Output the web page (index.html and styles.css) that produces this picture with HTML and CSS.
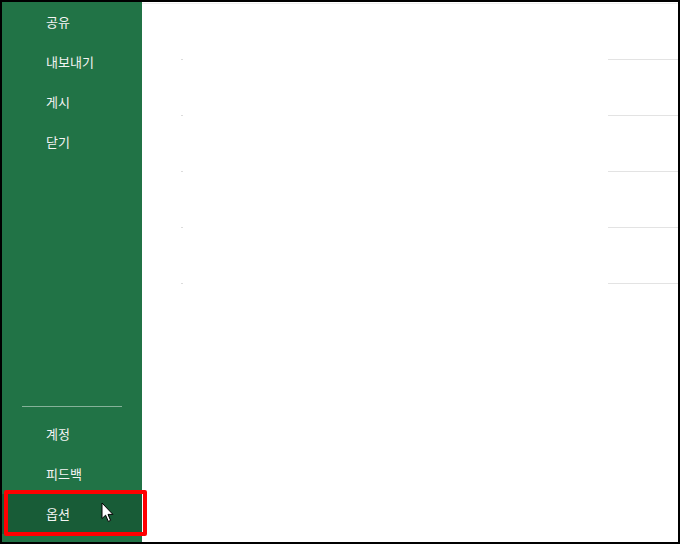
FILE: index.html
```html
<!DOCTYPE html>
<html lang="ko">
    <head>
        <meta charset="UTF-8">
        <meta name="viewport" content="width=device-width, initial-scale=1.0">
        <title>옵션</title>
        <link rel="stylesheet" href="styles.css">
    </head>
    <body>
        <div id="frame">
            <!-- Backstage menu -->
            <nav id="sidebar">
                <div class="menu">
                    <a class="item">공유</a>
                    <a class="item">내보내기</a>
                    <a class="item">게시</a>
                    <a class="item">닫기</a>
                </div>
                <div class="menu">
                    <div class="divider"></div>
                    <a class="item">계정</a>
                    <a class="item">피드백</a>
                    <a class="item selected">옵션
                        <svg class="cursor" width="14" height="21" viewBox="0 0 14 21">
                            <path d="M1 1 L1 16.5 L4.6 13.2 L7.3 19.4 L9.6 18.4 L7 12.4 L11.9 12.4 Z" fill="#fff" stroke="#000" stroke-width="1" stroke-linejoin="round"/>
                        </svg>
                    </a>
                    <div class="highlight"></div>
                </div>
            </nav>
            <!-- Content panel -->
            <div id="content">
                <div class="row"><span class="dot"></span><span class="rule"></span></div>
                <div class="row"><span class="dot"></span><span class="rule"></span></div>
                <div class="row"><span class="dot"></span><span class="rule"></span></div>
                <div class="row"><span class="dot"></span><span class="rule"></span></div>
                <div class="row"><span class="dot"></span><span class="rule"></span></div>
            </div>
        </div>
    </body>
</html>
```

FILE: styles.css
```css
html, body {
    margin: 0;
    padding: 0;
    background-color: #000;
}
#frame {
    width: 676px;
    height: 540px;
    margin: 2px;
    display: flex;
    background-color: #fff;
    font-family: "Noto Sans CJK KR", "Noto Sans", sans-serif;
}
#sidebar {
    width: 140px;
    background-color: #217346;
    display: flex;
    flex-direction: column;
    justify-content: space-between;
    padding-bottom: 8px;
    box-sizing: border-box;
}
.menu {
    position: relative;
    display: flex;
    flex-direction: column;
}
.item {
    position: relative;
    height: 40px;
    line-height: 40px;
    padding-left: 44px;
    font-size: 13px;
    color: #f4f4f4;
    cursor: pointer;
}
.item.selected {
    background-color: #185c37;
}
.divider {
    height: 1px;
    margin: 0 20px 7px 20px;
    background-color: rgba(255, 255, 255, 0.45);
}
.cursor {
    position: absolute;
    left: 99px;
    top: 8px;
}
.highlight {
    position: absolute;
    left: 2px;
    bottom: -2px;
    width: 135px;
    height: 38px;
    border: 4px solid #ff0000;
    border-radius: 2px;
}
#content {
    flex: 1;
    padding-top: 1px;
}
#content::before {
    content: "";
    display: block;
    height: 1px;
    background-color: #f0f0f0;
}
.row {
    height: 56px;
    display: flex;
    align-items: flex-end;
    justify-content: space-between;
    padding-left: 39px;
}
.dot {
    width: 2px;
    height: 1px;
    background-color: #dcdcdc;
}
.rule {
    width: 70px;
    height: 1px;
    background-color: #e3e3e3;
}
```
